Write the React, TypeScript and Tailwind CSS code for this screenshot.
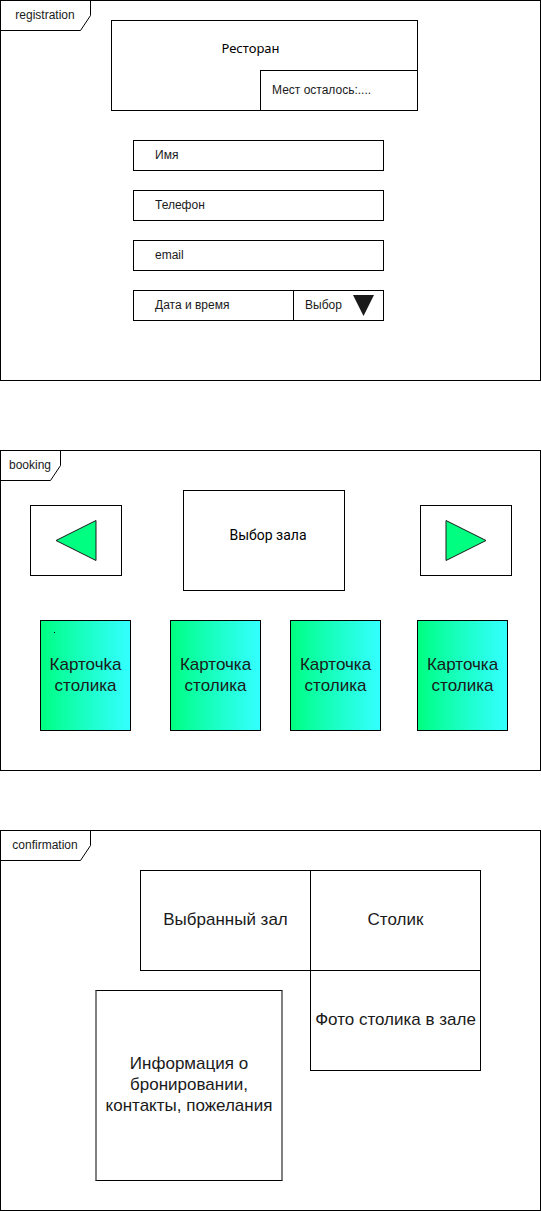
import React from "react";

type FrameProps = {
  title: string;
  wide?: boolean;
  className: string;
  children: React.ReactNode;
};

function Frame({ title, wide = true, className, children }: FrameProps) {
  return (
    <section className={`relative border border-black ${className}`}>
      <h2
        className={`absolute left-0 top-0 flex h-[30px] items-center justify-center pr-0.5 pb-0.5 text-xs ${
          wide ? "w-[90px]" : "w-[60px]"
        }`}
      >
        <svg
          className="absolute inset-0 h-full w-full"
          viewBox={wide ? "0 0 90 30" : "0 0 60 30"}
          fill="none"
          stroke="#000"
          aria-hidden="true"
        >
          <path d={wide ? "M0 29.5H79.5L89.5 14.5V0" : "M0 29.5H49.5L59.5 14.5V0"} />
        </svg>
        <span>{title}</span>
      </h2>
      {children}
    </section>
  );
}

function Field({ label, type }: { label: string; type: string }) {
  return (
    <input
      type={type}
      aria-label={label}
      placeholder={label}
      className="block h-[31px] w-full border border-black bg-white pb-0.5 pl-[21px] text-xs text-[#1a1a1a] placeholder:text-[#1a1a1a]"
    />
  );
}

function Registration() {
  return (
    <Frame title="registration" className="pt-[19px] pb-[59px]">
      <div className="flex justify-center pr-3">
        <header className="flex w-[307px] flex-col border border-black">
          <h1 className="h-[49px] pt-[15px] pr-7 text-center font-['Noto_Sans','Open_Sans',sans-serif] text-[13px] leading-6 text-black">
            Ресторан
          </h1>
          <p className="flex h-10 w-[157px] items-center self-end border-t border-l border-black pb-0.5 pl-[11px] text-xs">
            Мест осталось:....
          </p>
        </header>
      </div>
      <div className="mt-[29px] flex justify-center pr-6">
        <form className="flex w-[251px] flex-col gap-[19px]">
          <Field label="Имя" type="text" />
          <Field label="Телефон" type="tel" />
          <Field label="email" type="email" />
          <div className="flex h-[31px] border border-black">
            <label htmlFor="date" className="flex flex-1 items-center pb-0.5 pl-[21px] text-xs">
              Дата и время
            </label>
            <div className="relative w-[90px] border-l border-black">
              <select
                id="date"
                className="h-full w-full appearance-none bg-transparent pb-0.5 pl-[11px] text-xs text-[#1a1a1a]"
              >
                <option>Выбор</option>
              </select>
              <svg
                className="pointer-events-none absolute top-1 right-[9px] h-[21px] w-[21px]"
                viewBox="0 0 21 21"
                aria-hidden="true"
              >
                <path d="M0 0H21L10.5 21Z" fill="#1a1a1a" />
              </svg>
            </div>
          </div>
        </form>
      </div>
    </Frame>
  );
}

function ArrowButton({ label, path }: { label: string; path: string }) {
  return (
    <button
      type="button"
      aria-label={label}
      className="flex h-[71px] w-[92px] items-center justify-center border border-black"
    >
      <svg className="h-[43px] w-[42px]" viewBox="0 0 42 43" aria-hidden="true">
        <path d={path} fill="#00ff80" stroke="#1a1a1a" strokeWidth="1" />
      </svg>
    </button>
  );
}

const cards = [
  { first: "Карточkа", gap: "", dot: true },
  { first: "Карточка", gap: "ml-[39px]", dot: false },
  { first: "Карточка", gap: "ml-[29px]", dot: false },
  { first: "Карточка", gap: "ml-9", dot: false },
];

function Booking() {
  return (
    <Frame title="booking" wide={false} className="mt-[69px] pt-[39px] pb-[39px]">
      <div className="flex items-center justify-between pr-7 pl-[29px]">
        <ArrowButton label="Предыдущий зал" path="M1 21.5L41 1.5V41.5Z" />
        <div className="mr-[14px] flex h-[101px] w-[162px] items-center justify-center border border-black pb-3 pl-2">
          <h3 className="font-['Roboto','Open_Sans',sans-serif] text-sm leading-6 text-black">
            Выбор зала
          </h3>
        </div>
        <ArrowButton label="Следующий зал" path="M41 21.5L1 1.5V41.5Z" />
      </div>
      <div className="mt-[29px] flex justify-center pl-[7px]">
        {cards.map((card, i) => (
          <button
            key={i}
            type="button"
            className={`relative flex h-[111px] w-[91px] shrink-0 items-center justify-center border border-black bg-linear-to-r from-[#00ff80] to-[#33ffff] pb-0.5 text-[17px] leading-[21px] ${card.gap}`}
          >
            {card.dot && <span className="absolute top-[11px] left-[13px] h-px w-px bg-black" />}
            <span>
              {card.first}
              <br />
              столика
            </span>
          </button>
        ))}
      </div>
    </Frame>
  );
}

function Confirmation() {
  return (
    <Frame title="confirmation" className="mt-[59px] pt-[39px] pb-[29px]">
      <div className="flex justify-center pl-[35px] text-center text-[17px] leading-[21px]">
        <div className="flex flex-col items-end">
          <div className="flex h-[101px] w-[171px] items-center justify-center border border-black pb-0.5">
            Выбранный зал
          </div>
          <div className="mt-[19px] mr-7 flex h-[191px] w-[188px] items-center justify-center border-x-2 border-y border-x-[#808080] border-y-black pb-0.5">
            <p>
              Информация о<br />
              бронировании,
              <br />
              контакты, пожелания
            </p>
          </div>
        </div>
        <div className="-ml-px flex flex-col">
          <div className="flex h-[101px] w-[171px] items-center justify-center border border-black pb-0.5">
            Столик
          </div>
          <div className="-mt-px flex h-[101px] w-[171px] items-center justify-center border border-black pb-0.5">
            Фото столика в зале
          </div>
        </div>
      </div>
    </Frame>
  );
}

export default function App() {
  return (
    <main className="bg-white font-['Liberation_Sans',Arial,sans-serif] text-[#1a1a1a]">
      <Registration />
      <Booking />
      <Confirmation />
    </main>
  );
}
